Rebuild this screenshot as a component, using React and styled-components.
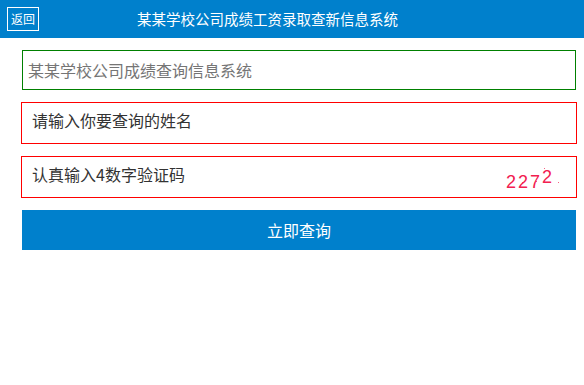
import React from "react";
import styled, { createGlobalStyle } from "styled-components";

const Global = createGlobalStyle`
  html, body { margin: 0; padding: 0; background: #fff; }
  body { font-family: "Noto Sans CJK SC", "Noto Sans", sans-serif; }
  * { box-sizing: border-box; }
`;

const Header = styled.header`
  height: 38px;
  background: #0080cc;
  display: flex;
  align-items: center;
  padding: 0 7px;
  color: #fff;
`;

const BackButton = styled.button`
  width: 32px;
  height: 24px;
  border: 1px solid #fff;
  background: transparent;
  color: #fff;
  font-family: "Noto Sans CJK SC", sans-serif;
  font-size: 12px;
  padding: 0;
  display: flex;
  align-items: center;
  justify-content: center;
  line-height: 1;
`;

const Title = styled.h1`
  flex: 1;
  margin: 0;
  padding-right: 81px;
  text-align: center;
  font-size: 14.5px;
  font-weight: normal;
  line-height: 1;
`;

const Form = styled.form`
  display: flex;
  flex-direction: column;
  gap: 12px;
  padding: 12px 7px 0 21px;
  align-items: flex-start;
`;

const Field = styled.div`
  position: relative;
  width: ${(p) => (p.$narrow ? "554px" : "556px")};
  margin-left: ${(p) => (p.$narrow ? "1px" : "0")};
`;

const Input = styled.input`
  display: block;
  width: 100%;
  height: ${(p) => (p.$narrow ? "40px" : "42px")};
  border: 1px solid ${(p) => p.$border};
  outline: none;
  padding: ${(p) => (p.$narrow ? "0 5px" : "0 10px 7px")};
  font-family: "Noto Sans CJK SC", sans-serif;
  font-size: 16px;
  color: #333;
  background: #fff;
  &::placeholder {
    color: ${(p) => p.$ph};
    opacity: 1;
  }
`;

const Captcha = styled.div`
  position: absolute;
  right: 16px;
  top: 8px;
  width: 56px;
  height: 30px;
  pointer-events: none;
`;

const SubmitButton = styled.button`
  width: 554px;
  height: 40px;
  margin-left: 1px;
  border: none;
  background: #0080cc;
  color: #fff;
  font-family: "Noto Sans CJK SC", sans-serif;
  font-size: 16px;
  line-height: 1;
  padding: 0;
`;

function CaptchaImage() {
  return (
    <Captcha>
      <svg width="56" height="30" viewBox="0 0 56 30" overflow="visible">
        <g fill="#f2204f" fontFamily="Liberation Sans, Arial, sans-serif" fontSize="18">
          <text x="1" y="24">2</text>
          <text x="13" y="24">2</text>
          <text x="25" y="24">7</text>
          <text x="37" y="19">2</text>
        </g>
        <g fill="#f2204f" opacity="0.7">
          <rect x="39" y="4" width="1" height="1" />
          <rect x="44" y="8" width="1" height="1" />
          <rect x="53" y="18" width="1" height="1" />
          <rect x="17" y="18" width="1" height="1" />
          <rect x="31" y="17" width="1" height="1" />
          <rect x="8" y="14" width="1" height="1" />
        </g>
      </svg>
    </Captcha>
  );
}

export default function App() {
  return (
    <>
      <Global />
      <Header>
        <BackButton type="button">返回</BackButton>
        <Title>某某学校公司成绩工资录取查新信息系统</Title>
      </Header>
      <Form onSubmit={(e) => e.preventDefault()}>
        <Field $narrow>
          <Input $narrow $border="#008000" $ph="#757575" placeholder="某某学校公司成绩查询信息系统" />
        </Field>
        <Field>
          <Input $border="#ff0000" $ph="#333" placeholder="请输入你要查询的姓名" />
        </Field>
        <Field>
          <Input $border="#ff0000" $ph="#333" placeholder="认真输入4数字验证码" />
          <CaptchaImage />
        </Field>
        <SubmitButton type="submit">立即查询</SubmitButton>
      </Form>
    </>
  );
}
